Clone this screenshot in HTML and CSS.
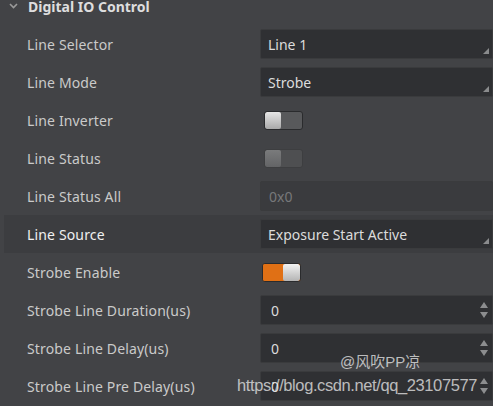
FILE: index.html
```html
<!DOCTYPE html>
<html>
<head>
<meta charset="utf-8">
<link rel="stylesheet" href="styles.css">
</head>
<body>
<div class="panel">
  <div class="header">
    <svg class="chev" width="9" height="6" viewBox="0 0 9 6"><path d="M1 1 L4.5 4.5 L8 1" fill="none" stroke="#9a9a9a" stroke-width="1.6"/></svg>
    <span>Digital IO Control</span>
  </div>
  <div class="row"><div class="label">Line Selector</div><div class="value"><div class="box select">Line 1</div></div></div>
  <div class="row"><div class="label">Line Mode</div><div class="value"><div class="box select">Strobe</div></div></div>
  <div class="row"><div class="label">Line Inverter</div><div class="value"><div class="toggle"><span class="knob"></span><span class="track"></span></div></div></div>
  <div class="row"><div class="label">Line Status</div><div class="value"><div class="toggle disabled"><span class="knob"></span><span class="track"></span></div></div></div>
  <div class="row"><div class="label">Line Status All</div><div class="value"><div class="box readonly">0x0</div></div></div>
  <div class="row active"><div class="label">Line Source</div><div class="value"><div class="box select">Exposure Start Active</div></div></div>
  <div class="row"><div class="label">Strobe Enable</div><div class="value"><div class="toggle on"><span class="fill"></span><span class="knob"></span></div></div></div>
  <div class="row"><div class="label">Strobe Line Duration(us)</div><div class="value"><div class="box number">0</div></div></div>
  <div class="row"><div class="label">Strobe Line Delay(us)</div><div class="value"><div class="box number">0</div></div></div>
  <div class="row"><div class="label">Strobe Line Pre Delay(us)</div><div class="value"><div class="box number">0</div></div></div>
</div>
<div class="wm wm1">@风吹PP凉</div>
<div class="wm wm2">https://blog.csdn.net/qq_23107577</div>
</body>
</html>
```
FILE: styles.css
```css
html, body {
  margin: 0;
  padding: 0;
  width: 493px;
  height: 406px;
  overflow: hidden;
  background: #424346;
  font-family: "Noto Sans", "Open Sans", sans-serif;
  font-size: 14px;
  color: #cfcfcf;
}
.panel {
  position: relative;
  margin-top: -13px;
}
.header {
  height: 38px;
  display: flex;
  align-items: center;
  font-weight: bold;
  color: #dedede;
}
.chev {
  margin-left: 9px;
  margin-right: 10px;
}
.row {
  height: 38px;
  display: grid;
  grid-template-columns: 260px 1fr;
  align-items: center;
}
.row.active {
  background: #3c3d40;
  margin-left: 4px;
}
.row.active .label {
  padding-left: 23px;
  color: #f0f0f0;
}
.label {
  padding-left: 27px;
  color: #cacaca;
  letter-spacing: 0.15px;
}
.row.active .value { margin-left: -4px; }
.value {
  display: flex;
  align-items: center;
}
.box {
  position: relative;
  box-sizing: border-box;
  width: 233px;
  height: 30px;
  background: #2f3033;
  border: 1px solid #3a3b3d;
  border-radius: 2px;
  padding-left: 7px;
  display: flex;
  align-items: center;
  color: #dcdcdc;
}
.box.readonly {
  background: #3a3b3e;
  color: #77787a;
  padding-left: 8px;
}
.box.number { padding-left: 10px; }
.select::after {
  content: "";
  position: absolute;
  right: 3px;
  bottom: 4px;
  border-left: 6px solid transparent;
  border-bottom: 6px solid #8a8b8d;
}
.number::before, .number::after {
  content: "";
  position: absolute;
  right: 4px;
  border-left: 4px solid transparent;
  border-right: 4px solid transparent;
}
.number::before {
  top: 6px;
  border-bottom: 6px solid #8c8d8f;
}
.number::after {
  bottom: 6px;
  border-top: 6px solid #8c8d8f;
}
.toggle {
  display: flex;
  margin-left: 4px;
  width: 39px;
  height: 19px;
  box-sizing: border-box;
  border: 1px solid #2a2b2d;
  border-radius: 3px;
  overflow: hidden;
  background: #58595b;
}
.toggle .knob {
  width: 16px;
  height: 100%;
  background: linear-gradient(#e6e6e6, #a9a9a9);
  border-radius: 2px;
}
.toggle .track { flex: 1; }
.toggle.disabled { border-color: #3d3e40; background: #4e4f51; }
.toggle.disabled .knob { background: linear-gradient(#7a7b7c, #636466); }
.toggle.on { margin-left: 2px; background: #e07015; }
.toggle.on .fill { flex: 1; background: #e07015; }
.toggle.on .knob { width: 17px; background: linear-gradient(#f2f2f2, #b4b4b4); }
.wm {
  position: absolute;
  font-family: "Liberation Sans", "Noto Sans CJK SC", sans-serif;
  color: rgba(235, 235, 235, 0.75);
  white-space: nowrap;
}
.wm1 {
  left: 340px;
  top: 350px;
  font-size: 15px;
}
.wm2 {
  left: 237px;
  top: 376px;
  font-size: 16.5px;
  letter-spacing: -0.4px;
}
```
